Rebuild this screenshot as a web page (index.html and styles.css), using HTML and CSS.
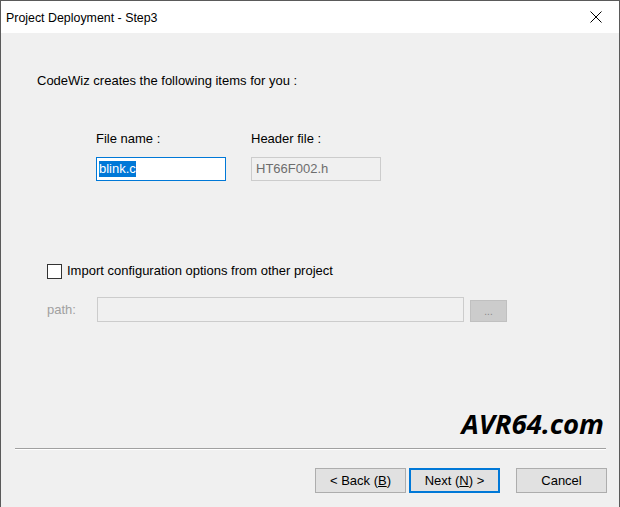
FILE: index.html
```html
<!DOCTYPE html>
<html lang="en">
<head>
    <meta charset="UTF-8">
    <title>Project Deployment - Step3</title>
    <link rel="stylesheet" href="styles.css">
</head>
<body>
    <div class="window">
        <div class="titlebar">
            <span class="title">Project Deployment - Step3</span>
            <span class="close">
                <svg width="12" height="12" viewBox="0 0 12 12"><path d="M0.5 0.5 L11.5 11.5 M11.5 0.5 L0.5 11.5" stroke="#000" stroke-width="1" fill="none"/></svg>
            </span>
        </div>

        <div class="content">
            <p class="intro">CodeWiz creates the following items for you :</p>

            <div class="fields">
                <div class="field">
                    <label>File name :</label>
                    <div class="textbox focused"><span class="selected">blink.c</span></div>
                </div>
                <div class="field">
                    <label>Header file :</label>
                    <div class="textbox disabled">HT66F002.h</div>
                </div>
            </div>

            <div class="check-row">
                <span class="checkbox"></span>
                <span>Import configuration options from other project</span>
            </div>

            <div class="path-row">
                <span class="path-label">path:</span>
                <div class="path-box"></div>
                <span class="browse">...</span>
            </div>

            <div class="brand">AVR64.com</div>
        </div>

        <div class="separator"></div>

        <div class="buttons">
            <button class="btn">&lt; Back (<u>B</u>)</button>
            <button class="btn default">Next (<u>N</u>) &gt;</button>
            <button class="btn cancel">Cancel</button>
        </div>
    </div>
</body>
</html>
```

FILE: styles.css
```css
body {
    margin: 0;
    font-family: 'Liberation Sans', Arial, sans-serif;
    font-size: 13px;
    line-height: 16px;
    color: #000;
}

.window {
    width: 620px;
    height: 507px;
    box-sizing: border-box;
    border: 1px solid #5a5a5a;
    border-bottom: none;
    background: #f0f0f0;
    display: flex;
    flex-direction: column;
}

.titlebar {
    height: 32px;
    background: #fff;
    display: flex;
    align-items: center;
    justify-content: space-between;
    padding-left: 5px;
    flex-shrink: 0;
}

.title {
    font-size: 12.4px;
    padding-top: 1px;
}

.close {
    width: 46px;
    display: flex;
    justify-content: center;
    padding-left: 6px;
}

.content {
    flex: 1;
    padding-left: 36px;
}

.intro {
    margin: 40px 0 0;
}

.fields {
    display: flex;
    gap: 25px;
    margin: 42px 0 0 59px;
}

.field {
    width: 130px;
}

.field label {
    display: block;
    margin-bottom: 10px;
}

.textbox {
    height: 24px;
    box-sizing: border-box;
    padding: 0 2px;
    display: flex;
    align-items: center;
    background: #fff;
    border: 1px solid #7a7a7a;
}

.textbox.focused {
    border-color: #0078d7;
}

.textbox.disabled {
    background: #f0f0f0;
    border-color: #cccccc;
    color: #6d6d6d;
    padding-left: 4px;
}

.selected {
    background: #0078d7;
    color: #fff;
}

.check-row {
    display: flex;
    align-items: center;
    gap: 5px;
    margin: 82px 0 0 10px;
}

.checkbox {
    width: 15px;
    height: 15px;
    box-sizing: border-box;
    border: 1px solid #333;
    background: #fff;
}

.path-row {
    display: flex;
    align-items: center;
    margin: 18px 0 0 10px;
}

.path-label {
    color: #a0a0a0;
    width: 50px;
}

.path-box {
    width: 367px;
    height: 25px;
    box-sizing: border-box;
    border: 1px solid #cccccc;
    background: #f0f0f0;
}

.browse {
    width: 37px;
    height: 22px;
    box-sizing: border-box;
    margin: 3px 0 0 6px;
    background: #cccccc;
    border: 1px solid #c0c0c0;
    color: #888;
    font-size: 10px;
    text-align: center;
    line-height: 22px;
}

.brand {
    margin: 86px 15px 0 0;
    text-align: right;
    font-family: 'Open Sans', sans-serif;
    font-weight: bold;
    font-style: italic;
    font-size: 27.5px;
    line-height: 32px;
}

.separator {
    height: 1px;
    margin: 0 13px 0 14px;
    background: #a0a0a0;
    border-bottom: 1px solid #fff;
}

.buttons {
    display: flex;
    justify-content: flex-end;
    padding: 18px 12px 14px 0;
}

.btn {
    width: 91px;
    height: 25px;
    box-sizing: border-box;
    background: #e1e1e1;
    border: 1px solid #adadad;
    font-family: 'Liberation Sans', Arial, sans-serif;
    font-size: 13px;
    color: #000;
    padding: 0;
}

.btn.default {
    margin-left: 3px;
    border: 2px solid #0078d7;
}

.btn.cancel {
    margin-left: 16px;
}
```
